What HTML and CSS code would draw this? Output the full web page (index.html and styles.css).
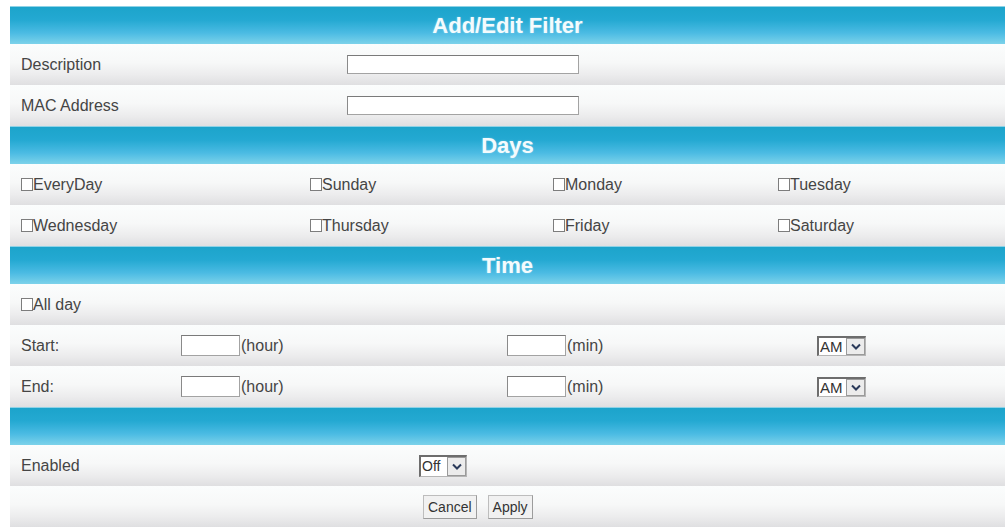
FILE: index.html
```html
<!DOCTYPE html>
<html>
<head>
<meta charset="utf-8">
<title>Add/Edit Filter</title>
<link rel="stylesheet" href="styles.css">
</head>
<body>
<div class="panel">
  <div class="hdr">Add/Edit Filter</div>
  <div class="row r-text">
    <div class="cell">Description</div>
    <div class="cell"><input class="txt wide" type="text"></div>
  </div>
  <div class="row r-text">
    <div class="cell">MAC Address</div>
    <div class="cell"><input class="txt wide" type="text"></div>
  </div>

  <div class="hdr">Days</div>
  <div class="row r-days">
    <label class="cell"><input class="cb" type="checkbox">EveryDay</label>
    <label class="cell"><input class="cb" type="checkbox">Sunday</label>
    <label class="cell"><input class="cb" type="checkbox">Monday</label>
    <label class="cell"><input class="cb" type="checkbox">Tuesday</label>
  </div>
  <div class="row r-days">
    <label class="cell"><input class="cb" type="checkbox">Wednesday</label>
    <label class="cell"><input class="cb" type="checkbox">Thursday</label>
    <label class="cell"><input class="cb" type="checkbox">Friday</label>
    <label class="cell"><input class="cb" type="checkbox">Saturday</label>
  </div>

  <div class="hdr">Time</div>
  <div class="row">
    <label class="cell"><input class="cb" type="checkbox">All day</label>
  </div>
  <div class="row r-time">
    <div class="cell">Start:</div>
    <div class="cell"><input class="txt short" type="text">(hour)</div>
    <div class="cell"><input class="txt short" type="text">(min)</div>
    <div class="cell">
      <span class="sel"><select><option>AM</option><option>PM</option></select><span class="arr"><svg width="10" height="7" viewBox="0 0 10 7"><path d="M1 1.5 L5 5.5 L9 1.5" fill="none" stroke="#2a3a5a" stroke-width="2"/></svg></span></span>
    </div>
  </div>
  <div class="row r-time">
    <div class="cell">End:</div>
    <div class="cell"><input class="txt short" type="text">(hour)</div>
    <div class="cell"><input class="txt short" type="text">(min)</div>
    <div class="cell">
      <span class="sel"><select><option>AM</option><option>PM</option></select><span class="arr"><svg width="10" height="7" viewBox="0 0 10 7"><path d="M1 1.5 L5 5.5 L9 1.5" fill="none" stroke="#2a3a5a" stroke-width="2"/></svg></span></span>
    </div>
  </div>

  <div class="hdr"></div>
  <div class="row r-enabled">
    <div class="cell">Enabled</div>
    <div class="cell">
      <span class="sel sel-off"><select><option>Off</option><option>On</option></select><span class="arr"><svg width="10" height="7" viewBox="0 0 10 7"><path d="M1 1.5 L5 5.5 L9 1.5" fill="none" stroke="#2a3a5a" stroke-width="2"/></svg></span></span>
    </div>
  </div>
  <div class="row r-btns">
    <div class="cell"></div>
    <div class="cell btns">
      <button class="btn" type="button">Cancel</button>
      <button class="btn" type="button">Apply</button>
    </div>
  </div>
</div>
</body>
</html>
```

FILE: styles.css
```css
html, body {
  background: #ffffff;
}
body {
  margin: 6px 2px 0 10px;
  font-family: "Liberation Sans", Arial, sans-serif;
  font-size: 16px;
  color: #454545;
}
.panel {
  width: 995px;
  display: flex;
  flex-direction: column;
}
.hdr {
  height: 38px;
  box-sizing: border-box;
  border-top: 1px solid #8fd2e6;
  background: linear-gradient(to bottom, #1ca4cb 0%, #24a9d2 35%, #4bbbe3 70%, #7cd2ea 100%);
  color: #f4fbfd;
  font-weight: bold;
  font-size: 22px;
  display: flex;
  align-items: center;
  justify-content: center;
  text-shadow: 0 0 2px rgba(255,255,255,0.35);
}
.row {
  height: 41px;
  display: grid;
  grid-template-columns: 1fr;
  align-items: center;
  background: linear-gradient(to bottom, #fbfdfd 0%, #f7f8f8 45%, #ececed 75%, #dfdfe1 100%);
}
.cell {
  padding-left: 11px;
  display: flex;
  align-items: center;
  white-space: nowrap;
}
.r-text { grid-template-columns: 326px 1fr; }
.r-days { grid-template-columns: 289px 243px 225px 238px; }
.r-time { grid-template-columns: 160px 326px 310px 199px; }
.r-enabled { grid-template-columns: 398px 1fr; }
.r-btns { grid-template-columns: 402px 1fr; }

.txt {
  margin: 0;
  box-sizing: border-box;
  height: 19px;
  border: 1px solid #a3a3a3;
  border-top-color: #7a7a7a;
  border-left-color: #8a8a8a;
  background: #fff;
  padding: 0 2px;
  font: inherit;
}
.wide { width: 232px; }
.short { width: 59px; height: 21px; margin-right: 1px; }

.cb {
  appearance: none;
  -webkit-appearance: none;
  margin: 0;
  width: 12px;
  height: 13px;
  box-sizing: border-box;
  border: 1px solid #7d7d7d;
  background: #fff;
  flex: none;
}

.sel {
  display: inline-flex;
  align-items: stretch;
  height: 20px;
  box-sizing: border-box;
  border: 1px solid #b5b5b5;
  border-top: 2px solid #6d6d6d;
  border-left: 2px solid #6d6d6d;
  background: #fff;
}
.sel select {
  appearance: none;
  -webkit-appearance: none;
  border: 0;
  margin: 0;
  padding: 0 0 0 1px;
  width: 27px;
  background: #fff;
  font-family: "Liberation Sans", Arial, sans-serif;
  font-size: 15px;
  color: #333;
  outline: none;
}
.sel .arr {
  width: 19px;
  box-sizing: border-box;
  border: 1px solid #9a9a9a;
  background: #ececec;
  display: flex;
  align-items: center;
  justify-content: center;
}
.sel-off {
  height: 22px;
}
.sel-off select {
  width: 26px;
  font-size: 14px;
}

.btns { gap: 11px; }
.btn {
  margin: 0;
  height: 24px;
  padding: 0 4px;
  box-sizing: border-box;
  border: 1px solid #9c9c9c;
  border-top-color: #bdbdbd;
  border-left-color: #bdbdbd;
  background: #f1f1f1;
  font-family: "Liberation Sans", Arial, sans-serif;
  font-size: 14px;
  color: #333;
  border-radius: 0;
}
```
